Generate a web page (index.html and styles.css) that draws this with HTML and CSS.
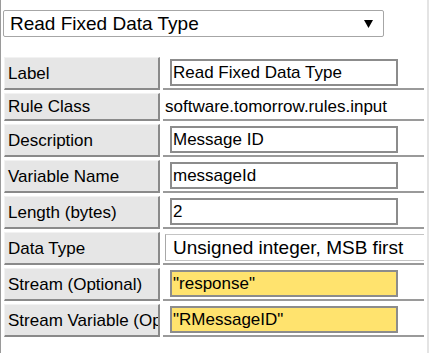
FILE: index.html
```html
<!DOCTYPE html>
<html lang="en">
<head>
  <meta charset="UTF-8">
  <title>Rule Editor</title>
  <link rel="stylesheet" href="styles.css">
</head>
<body>
  <div class="panel">
    <select class="rule-type">
      <option>Read Fixed Data Type</option>
    </select>

    <table class="props">
      <tr>
        <td class="key">Label</td>
        <td class="val"><input class="field" type="text" value="Read Fixed Data Type"></td>
      </tr>
      <tr>
        <td class="key">Rule Class</td>
        <td class="val plain">software.tomorrow.rules.input</td>
      </tr>
      <tr>
        <td class="key">Description</td>
        <td class="val"><input class="field" type="text" value="Message ID"></td>
      </tr>
      <tr>
        <td class="key">Variable Name</td>
        <td class="val"><input class="field" type="text" value="messageId"></td>
      </tr>
      <tr>
        <td class="key">Length (bytes)</td>
        <td class="val"><input class="field" type="text" value="2"></td>
      </tr>
      <tr>
        <td class="key">Data Type</td>
        <td class="val">
          <select class="data-type">
            <option>Unsigned integer, MSB first</option>
          </select>
        </td>
      </tr>
      <tr>
        <td class="key">Stream (Optional)</td>
        <td class="val"><input class="field expr" type="text" value="&quot;response&quot;"></td>
      </tr>
      <tr>
        <td class="key">Stream Variable (Optional)</td>
        <td class="val"><input class="field expr" type="text" value="&quot;RMessageID&quot;"></td>
      </tr>
    </table>
  </div>
</body>
</html>
```

FILE: styles.css
```css
html, body {
  margin: 0;
  background: #fff;
}

body {
  font-family: "Liberation Sans", Arial, sans-serif;
  font-size: 17px;
  color: #000;
}

.panel {
  width: 429px;
  height: 353px;
  box-sizing: border-box;
  border-left: 1px solid #9a9a9a;
  border-right: 2px solid #e4e4e4;
  overflow: hidden;
}

.rule-type {
  -webkit-appearance: none;
  appearance: none;
  display: block;
  margin: 10px 0 0 2px;
  width: 381px;
  height: 27px;
  padding: 0 0 0 6px;
  font-family: "Liberation Sans", Arial, sans-serif;
  font-size: 19px;
  color: #000;
  background: #fff url("data:image/svg+xml;utf8,<svg xmlns='http://www.w3.org/2000/svg' width='9' height='8'><path d='M0 0h9L4.5 8z' fill='black'/></svg>") no-repeat right 10px center;
  border: 1px solid #a6a6a6;
  border-radius: 2px;
}

.props {
  margin-top: 17px;
  width: 100%;
  border-spacing: 3px;
  table-layout: fixed;
}

.props td {
  box-sizing: border-box;
  line-height: 21px;
  white-space: nowrap;
  overflow: hidden;
}

.key {
  width: 156px;
  padding: 2px 0 2px 3px;
  background: #e6e6e6;
  border-top: 1px solid #f2f2f2;
  border-left: 1px solid #f2f2f2;
  border-right: 2px solid #8a8a8a;
  border-bottom: 2px solid #8a8a8a;
}

.val {
  padding: 2px 0 2px 2px;
  border-bottom: 2px solid #9a9a9a;
}

.field {
  box-sizing: border-box;
  display: block;
  margin-left: 5px;
  width: 228px;
  height: 27px;
  padding: 0 0 0 1px;
  font-family: "Liberation Sans", Arial, sans-serif;
  font-size: 17px;
  color: #000;
  background: #fff;
  border: 2px solid #8c8c8c;
  outline: none;
}

.field.expr {
  background: #ffe36e;
}

.data-type {
  -webkit-appearance: none;
  appearance: none;
  display: block;
  margin-top: 0;
  width: 300px;
  height: 27px;
  padding: 0 0 0 7px;
  font-family: "Liberation Sans", Arial, sans-serif;
  font-size: 19px;
  color: #000;
  background: #fff;
  border: 1px solid #c4c4c4;
  border-left-color: #a8a8a8;
}
```
